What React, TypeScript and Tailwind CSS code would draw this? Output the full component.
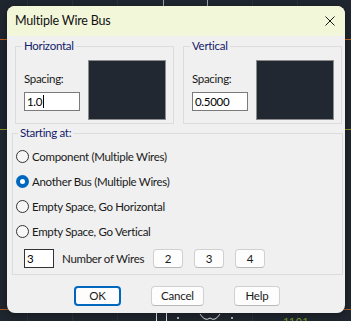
import React from "react";

const FONT = { fontFamily: "Lato, 'Liberation Sans', sans-serif" };

function Group({ legend, value, caret }: { legend: string; value: string; caret?: boolean }) {
  return (
    <fieldset className="w-[158px] border border-[#dcdcdc] p-0">
      <legend className="ml-[6px] px-[2px] text-[11.5px] tracking-[-0.3px] leading-[16px] text-[#14206a]">{legend}</legend>
      <div className="flex pl-[8px] pr-[7px] pt-[6px] pb-[3px]">
        <div className="flex flex-col">
          <span className="mt-[11px] text-[11.5px] tracking-[-0.3px] leading-[16px] text-[#1a1a1a]">Spacing:</span>
          <div className="mt-[5px] w-[56px] h-[19px] bg-white border border-[#7a7a7a] flex items-center pl-[2px] text-[11.5px] tracking-[-0.3px] text-black">
            <span>{value}</span>
            {caret && <span className="w-[1px] h-[13px] bg-black ml-[1px]" />}
          </div>
        </div>
        <div className="ml-[8px] w-[78px] h-[60px] bg-[#222831] border border-[#8c8c8c]" />
      </div>
    </fieldset>
  );
}

function Radio({ label, checked }: { label: string; checked?: boolean }) {
  return (
    <div className="h-[25px] flex items-center">
      {checked ? (
        <span className="w-[13px] h-[13px] rounded-full bg-[#0067c0] flex items-center justify-center">
          <span className="w-[5px] h-[5px] rounded-full bg-white" />
        </span>
      ) : (
        <span className="w-[13px] h-[13px] rounded-full border border-[#333333] bg-[#f7f7f7]" />
      )}
      <span className="ml-[3px] text-[11.5px] tracking-[-0.3px] leading-[16px] text-[#1a1a1a]">{label}</span>
    </div>
  );
}

function SmallBtn({ label }: { label: string }) {
  return (
    <div className="w-[30px] h-[19px] rounded-[4px] bg-[#fdfdfd] border border-[#d0d0d0] border-b-[#b8b8b8] flex items-center justify-center text-[11.5px] text-[#1a1a1a]">
      {label}
    </div>
  );
}

function Btn({ label, w, primary }: { label: string; w: string; primary?: boolean }) {
  return (
    <div
      className={`${w} h-[20px] rounded-[4px] bg-[#fdfdfd] flex items-center justify-center text-[11.5px] tracking-[-0.2px] text-[#1a1a1a] ${
        primary ? "border-2 border-[#0067c0]" : "border border-[#d0d0d0] border-b-[#b8b8b8]"
      }`}
    >
      {label}
    </div>
  );
}

export default function App() {
  return (
    <div className="relative w-[351px] h-[321px] overflow-hidden bg-[#20262f]" style={FONT}>
      <svg className="absolute inset-0" width="351" height="321">
        {[27, 72, 117, 252, 297].map((x) => (
          <line key={x} x1={x + 0.5} y1="0" x2={x + 0.5} y2="321" stroke="#2a313a" strokeWidth="1" />
        ))}
        <line x1="163.5" y1="0" x2="163.5" y2="10" stroke="#9ea3a8" strokeWidth="1" />
        <line x1="207.5" y1="0" x2="207.5" y2="10" stroke="#9ea3a8" strokeWidth="1" />
        <line x1="0" y1="39.5" x2="351" y2="39.5" stroke="#c0601c" strokeWidth="1" />
        <line x1="0" y1="129.5" x2="351" y2="129.5" stroke="#8f8f1f" strokeWidth="1" />
        <line x1="0" y1="309.5" x2="351" y2="309.5" stroke="#b05a1c" strokeWidth="1" />
        <line x1="156.5" y1="310" x2="156.5" y2="321" stroke="#e6e6e6" strokeWidth="1" />
        <line x1="166.5" y1="310" x2="166.5" y2="321" stroke="#e6e6e6" strokeWidth="1" />
        <circle cx="178" cy="318" r="1" fill="#e6e6e6" />
        <path d="M200 314 Q205 322 210 318 Q215 322 220 314" stroke="#e6e6e6" strokeWidth="1" fill="none" />
        <circle cx="232" cy="318" r="1" fill="#e6e6e6" />
        <text x="283" y="327" fill="#6f9a2c" fontSize="12" fontFamily="Liberation Sans">1101</text>
      </svg>

      <div className="absolute left-[7px] top-[6px] w-[338px] h-[307px] rounded-[8px] overflow-hidden bg-[#f0f0f0] flex flex-col shadow-[0_2px_8px_rgba(0,0,0,0.35)]">
        <div className="h-[30px] shrink-0 bg-[#f3f7da] flex items-center justify-between pl-[8px] pr-[10px]">
          <span className="text-[12.5px] tracking-[-0.2px] text-[#111]">Multiple Wire Bus</span>
          <svg width="10" height="10" viewBox="0 0 10 10">
            <path d="M0.5 0.5 L9.5 9.5 M9.5 0.5 L0.5 9.5" stroke="#1a1a1a" strokeWidth="1" />
          </svg>
        </div>

        <div className="flex flex-col">
          <div className="flex gap-[9px] ml-[8px] mt-[2px]">
            <Group legend="Horizontal" value="1.0" caret />
            <Group legend="Vertical" value="0.5000" />
          </div>

          <fieldset className="ml-[5px] mt-[1px] w-[331px] border border-[#dcdcdc] p-0">
            <legend className="ml-[5px] px-[2px] text-[11.5px] tracking-[-0.3px] leading-[16px] text-[#14206a]">Starting at:</legend>
            <div className="flex flex-col pl-[3px] pt-[3px] pb-[6px]">
              <Radio label="Component (Multiple Wires)" />
              <Radio label="Another Bus (Multiple Wires)" checked />
              <Radio label="Empty Space, Go Horizontal" />
              <Radio label="Empty Space, Go Vertical" />
              <div className="mt-[5px] h-[19px] flex items-center ml-[8px]">
                <div className="w-[30px] h-[19px] bg-white border border-[#333] flex items-center pl-[2px] text-[11.5px] text-black">
                  3
                </div>
                <span className="ml-[8px] w-[83px] text-[11.5px] tracking-[-0.3px] text-[#1a1a1a] whitespace-nowrap">Number of Wires</span>
                <div className="ml-[8px] flex gap-[11px]">
                  <SmallBtn label="2" />
                  <SmallBtn label="3" />
                  <SmallBtn label="4" />
                </div>
              </div>
            </div>
          </fieldset>

          <div className="mt-[11px] ml-[67px] flex gap-[30px]">
            <Btn label="OK" w="w-[47px]" primary />
            <Btn label="Cancel" w="w-[53px]" />
            <Btn label="Help" w="w-[46px]" />
          </div>
        </div>
      </div>
    </div>
  );
}
